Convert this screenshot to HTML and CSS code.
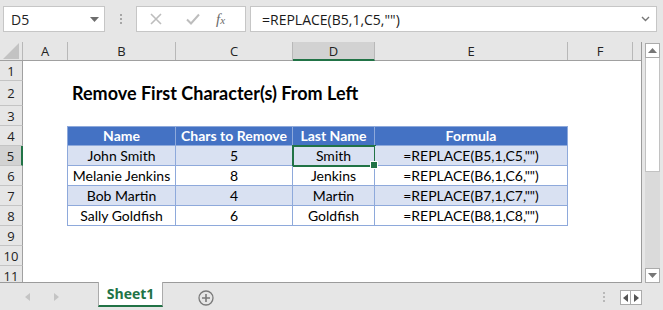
FILE: index.html
```html
<!DOCTYPE html>
<html lang="en">
<head>
    <meta charset="UTF-8">
    <title>Remove First Character(s) From Left</title>
    <link rel="stylesheet" href="styles.css">
</head>
<body>
    <div class="app">
        <div class="formula-bar">
            <div class="name-box">
                <span>D5</span>
                <svg width="9" height="5" viewBox="0 0 9 5"><path d="M0 0h9L4.5 5z" fill="#6d6d6d"/></svg>
            </div>
            <div class="grip"><i></i><i></i><i></i></div>
            <div class="fx-box">
                <svg width="14" height="14" viewBox="0 0 14 14"><path d="M2 2l10 10M12 2L2 12" stroke="#bdbdbd" stroke-width="1.6"/></svg>
                <svg width="16" height="14" viewBox="0 0 16 14"><path d="M2 7.5l4 4L14 2.5" stroke="#bdbdbd" stroke-width="2" fill="none"/></svg>
                <span class="fx">f<small>x</small></span>
            </div>
            <div class="formula-input">
                <span>=REPLACE(B5,1,C5,"")</span>
                <svg width="9" height="6" viewBox="0 0 9 6"><path d="M1 1l3.5 3.5L8 1" stroke="#777" stroke-width="1.4" fill="none"/></svg>
            </div>
        </div>

        <div class="main">
            <div class="sheet">
                <div class="col-head">
                    <div class="corner"><svg width="16" height="16" viewBox="0 0 16 16"><path d="M16 0v16H0z" fill="#c3c3c3"/></svg></div>
                    <div class="ch w-a">A</div>
                    <div class="ch w-b">B</div>
                    <div class="ch w-c">C</div>
                    <div class="ch w-d active">D</div>
                    <div class="ch w-e">E</div>
                    <div class="ch w-f">F</div>
                    <div class="ch w-g"></div>
                </div>

                <div class="row"><div class="rh">1</div></div>
                <div class="row tall">
                    <div class="rh">2</div>
                    <div class="w-a"></div>
                    <div class="title">Remove First Character(s) From Left</div>
                </div>
                <div class="row"><div class="rh">3</div></div>
                <div class="row">
                    <div class="rh">4</div>
                    <div class="w-a"></div>
                    <div class="cell head first w-b">Name</div>
                    <div class="cell head w-c">Chars to Remove</div>
                    <div class="cell head w-d">Last Name</div>
                    <div class="cell head w-e">Formula</div>
                </div>
                <div class="row">
                    <div class="rh active">5</div>
                    <div class="w-a"></div>
                    <div class="cell band first w-b">John Smith</div>
                    <div class="cell band w-c">5</div>
                    <div class="cell band w-d selected">Smith<span class="handle"></span></div>
                    <div class="cell band w-e">=REPLACE(B5,1,C5,"")</div>
                </div>
                <div class="row">
                    <div class="rh">6</div>
                    <div class="w-a"></div>
                    <div class="cell first w-b">Melanie Jenkins</div>
                    <div class="cell w-c">8</div>
                    <div class="cell w-d">Jenkins</div>
                    <div class="cell w-e">=REPLACE(B6,1,C6,"")</div>
                </div>
                <div class="row">
                    <div class="rh">7</div>
                    <div class="w-a"></div>
                    <div class="cell band first w-b">Bob Martin</div>
                    <div class="cell band w-c">4</div>
                    <div class="cell band w-d">Martin</div>
                    <div class="cell band w-e">=REPLACE(B7,1,C7,"")</div>
                </div>
                <div class="row">
                    <div class="rh">8</div>
                    <div class="w-a"></div>
                    <div class="cell first w-b">Sally Goldfish</div>
                    <div class="cell w-c">6</div>
                    <div class="cell w-d">Goldfish</div>
                    <div class="cell w-e">=REPLACE(B8,1,C8,"")</div>
                </div>
                <div class="row"><div class="rh">9</div></div>
                <div class="row"><div class="rh">10</div></div>
                <div class="row"><div class="rh">11</div></div>
            </div>

            <div class="vscroll">
                <div class="sbtn"><svg width="9" height="5" viewBox="0 0 9 5"><path d="M4.5 0L9 5H0z" fill="#777"/></svg></div>
                <div class="thumb"></div>
                <div class="track"></div>
                <div class="sbtn"><svg width="9" height="5" viewBox="0 0 9 5"><path d="M0 0h9L4.5 5z" fill="#777"/></svg></div>
            </div>
        </div>

        <div class="tab-bar">
            <div class="tab-nav">
                <svg width="5" height="8" viewBox="0 0 5 8"><path d="M5 0v8L0 4z" fill="#c4c4c4"/></svg>
                <svg width="5" height="8" viewBox="0 0 5 8"><path d="M0 0v8l5-4z" fill="#c4c4c4"/></svg>
            </div>
            <div class="tab">Sheet1</div>
            <div class="add-sheet">
                <svg width="16" height="16" viewBox="0 0 16 16"><circle cx="8" cy="8" r="7" fill="none" stroke="#7a7a7a" stroke-width="1.3"/><path d="M8 4v8M4 8h8" stroke="#7a7a7a" stroke-width="1.6"/></svg>
            </div>
            <div class="spacer"></div>
            <div class="grip small"><i></i><i></i><i></i></div>
            <div class="hnav">
                <div class="hbtn"><svg width="5" height="8" viewBox="0 0 5 8"><path d="M5 0v8L0 4z" fill="#555"/></svg></div>
                <div class="hbtn"><svg width="5" height="8" viewBox="0 0 5 8"><path d="M0 0v8l5-4z" fill="#555"/></svg></div>
            </div>
        </div>
    </div>
</body>
</html>
```

FILE: styles.css
```css
body {
    margin: 0;
    background-color: #e6e6e6;
    font-family: "Open Sans", "Noto Sans", sans-serif;
    color: #222;
}
.app {
    width: 663px;
    height: 310px;
    overflow: hidden;
    display: flex;
    flex-direction: column;
}

/* formula bar */
.formula-bar {
    height: 42px;
    display: flex;
    align-items: flex-start;
    padding: 6px 6px 0 3px;
    box-sizing: border-box;
}
.name-box, .fx-box, .formula-input {
    height: 26px;
    background-color: #fff;
    border: 1px solid #c6c6c6;
    box-sizing: border-box;
    display: flex;
    align-items: center;
}
.name-box {
    width: 102px;
    justify-content: space-between;
    padding: 0 5px 0 7px;
    font-size: 14px;
}
.grip {
    width: 31px;
    height: 26px;
    display: flex;
    flex-direction: column;
    align-items: center;
    justify-content: center;
    gap: 2px;
}
.grip i {
    width: 2px;
    height: 2px;
    background-color: #a6a6a6;
}
.fx-box {
    width: 110px;
    padding: 0 0 0 12px;
    gap: 0;
}
.fx-box svg:first-child {
    margin-right: 22px;
}
.fx-box svg:nth-child(2) {
    margin-right: 15px;
}
.fx {
    font-family: "Liberation Serif", serif;
    font-style: italic;
    color: #6a6a6a;
    font-size: 15px;
}
.fx small {
    font-size: 11px;
}
.formula-input {
    flex: 1;
    margin-left: 4px;
    justify-content: space-between;
    padding: 0 6px 0 11px;
    font-size: 14px;
    color: #1a1a1a;
}

/* sheet */
.main {
    height: 241px;
    display: flex;
}
.sheet {
    width: 642px;
    height: 241px;
    overflow: hidden;
    border-right: 1px solid #9b9b9b;
    border-bottom: 1px solid #9b9b9b;
    box-sizing: border-box;
    background-color: #fff;
}
.col-head {
    height: 19px;
    display: flex;
    background-color: #e6e6e6;
    border-bottom: 1px solid #a0a0a0;
    box-sizing: border-box;
}
.corner {
    width: 23px;
    flex: none;
    display: flex;
    align-items: flex-end;
    justify-content: flex-end;
    padding: 0 3px 1px 0;
    box-sizing: border-box;
    border-right: 1px solid #b8b8b8;
}
.ch {
    flex: none;
    box-sizing: border-box;
    border-right: 1px solid #b8b8b8;
    text-align: center;
    font-size: 13px;
    line-height: 18px;
    color: #222;
}
.ch.active {
    background-color: #d2d2d2;
    border-bottom: 2px solid #217346;
    margin-bottom: -1px;
}
.w-a { width: 45px; flex: none; }
.w-b { width: 108px; flex: none; }
.w-c { width: 117px; flex: none; }
.w-d { width: 82px; flex: none; }
.w-e { width: 193px; flex: none; }
.w-f { width: 65px; flex: none; }
.w-g { width: 10px; flex: none; border-right: none; }

.row {
    height: 20px;
    display: flex;
}
.row.tall {
    height: 25px;
}
.rh {
    width: 23px;
    flex: none;
    box-sizing: border-box;
    background-color: #e6e6e6;
    border-right: 1px solid #a0a0a0;
    border-bottom: 1px solid #c4c4c4;
    text-align: center;
    font-size: 13px;
    line-height: 20px;
    color: #222;
    display: flex;
    align-items: center;
    justify-content: center;
}
.rh.active {
    background-color: #d2d2d2;
    border-right: 2px solid #217346;
}
.title {
    font-family: Lato, "Open Sans", sans-serif;
    font-weight: bold;
    font-size: 18px;
    padding-left: 4px;
    line-height: 25px;
    color: #000;
    white-space: nowrap;
}

.cell {
    box-sizing: border-box;
    border-right: 1px solid #8ea9db;
    border-bottom: 1px solid #8ea9db;
    font-family: Lato, "Open Sans", sans-serif;
    font-size: 14px;
    text-align: center;
    line-height: 19px;
    color: #000;
    white-space: nowrap;
    position: relative;
}
.cell.first {
    border-left: 1px solid #8ea9db;
    margin-left: -1px;
    width: 109px;
}
.cell.head {
    background-color: #4472c4;
    color: #fff;
    font-weight: bold;
    border-top: 1px solid #8ea9db;
    line-height: 18px;
}
.cell.band {
    background-color: #d9e1f2;
}
.cell.selected {
    outline: 2px solid #217346;
    outline-offset: -1px;
}
.handle {
    position: absolute;
    right: -4px;
    bottom: -4px;
    width: 6px;
    height: 6px;
    background-color: #217346;
    border: 1px solid #fff;
    z-index: 2;
}

/* vertical scrollbar */
.vscroll {
    width: 15px;
    margin: 1px 0 0 3px;
    display: flex;
    flex-direction: column;
    background-color: #dadada;
}
.sbtn {
    height: 15px;
    flex: none;
    background-color: #fff;
    border: 1px solid #ababab;
    box-sizing: border-box;
    display: flex;
    align-items: center;
    justify-content: center;
}
.thumb {
    height: 114px;
    background-color: #fff;
    border: 1px solid #c2c2c2;
    border-top: none;
    box-sizing: border-box;
}
.track {
    flex: 1;
}

/* sheet tabs */
.tab-bar {
    height: 27px;
    display: flex;
    align-items: flex-start;
}
.tab-nav {
    width: 98px;
    display: flex;
    gap: 24px;
    padding: 10px 0 0 25px;
    box-sizing: border-box;
}
.tab {
    width: 65px;
    height: 25px;
    background-color: #fff;
    border-left: 1px solid #ababab;
    border-right: 1px solid #ababab;
    border-bottom: 2px solid #217346;
    box-sizing: border-box;
    margin-top: -1px;
    color: #217346;
    font-weight: bold;
    font-size: 14px;
    text-align: center;
    line-height: 24px;
    font-family: "Open Sans", sans-serif;
}
.add-sheet {
    padding: 6px 0 0 35px;
}
.spacer {
    flex: 1;
}
.grip.small {
    width: 8px;
    height: 27px;
    gap: 2px;
    margin-right: 12px;
    justify-content: flex-start;
    padding-top: 9px;
    box-sizing: border-box;
}
.grip.small i {
    background-color: #b9b9b9;
}
.hnav {
    display: flex;
    margin: 7px 21px 0 0;
}
.hbtn {
    width: 11px;
    height: 15px;
    background-color: #fff;
    border: 1px solid #ababab;
    box-sizing: border-box;
    display: flex;
    align-items: center;
    justify-content: center;
}
.hbtn + .hbtn {
    border-left: none;
}
```
